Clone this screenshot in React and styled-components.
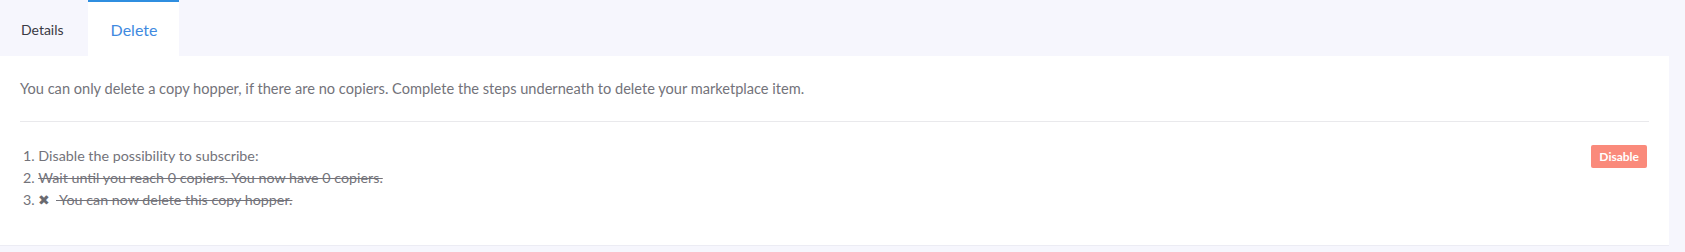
import React from 'react';
import styled, { createGlobalStyle } from 'styled-components';

const GlobalStyle = createGlobalStyle`
  body {
    margin: 0;
    background: #f6f6fd;
    font-family: Lato, 'Liberation Sans', sans-serif;
  }
`;

const Page = styled.div`
  padding-right: 16px;
`;

const TabBar = styled.div`
  display: flex;
  height: 56px;
`;

const Tab = styled.div`
  display: flex;
  align-items: center;
  padding: 0 ${props => (props.active ? '22px' : '24px')} 0 ${props => (props.active ? '23px' : '21px')};
  border-top: 2px solid ${props => (props.active ? '#2f8ee0' : 'transparent')};
  background: ${props => (props.active ? '#fff' : 'transparent')};
  color: ${props => (props.active ? '#3f8ae0' : '#3a3a44')};
  font-size: ${props => (props.active ? '16px' : '14px')};
  box-sizing: border-box;
`;

const Card = styled.div`
  background: #fff;
  padding: 20px 20px 34px;
  border-bottom: 1px solid #ececf4;
`;

const Intro = styled.p`
  margin: 2px 0 0;
  padding-bottom: 22px;
  border-bottom: 1px solid #e9e9ec;
  font-size: 14.6px;
  line-height: 21px;
  color: #73737a;
`;

const StepsRow = styled.div`
  display: flex;
  justify-content: space-between;
  align-items: flex-start;
  padding-top: 23px;
  padding-right: 2px;
`;

const Steps = styled.div`
  padding-left: 3px;
  font-size: 14.3px;
  line-height: 22px;
  color: #73737a;
`;

const Done = styled.span`
  text-decoration: line-through;
`;

const Cross = styled.span`
  font-size: 14px;
  color: #6a6a70;
  margin-right: 2px;
`;

const DisableButton = styled.button`
  height: 23px;
  padding: 0 8px;
  border: none;
  border-radius: 2px;
  background: #fa8a7b;
  color: #fff;
  font-family: inherit;
  font-weight: 700;
  font-size: 12px;
`;

export default function App() {
  return (
    <Page>
      <GlobalStyle />
      <TabBar>
        <Tab>Details</Tab>
        <Tab active>Delete</Tab>
      </TabBar>
      <Card>
        <Intro>
          You can only delete a copy hopper, if there are no copiers. Complete the steps underneath to delete your marketplace item.
        </Intro>
        <StepsRow>
          <Steps>
            <div>1. Disable the possibility to subscribe:</div>
            <div>
              2. <Done>Wait until you reach 0 copiers. You now have 0 copiers.</Done>
            </div>
            <div>
              3. <Cross>✖</Cross> <Done>&nbsp;You can now delete this copy hopper.</Done>
            </div>
          </Steps>
          <DisableButton>Disable</DisableButton>
        </StepsRow>
      </Card>
    </Page>
  );
}
